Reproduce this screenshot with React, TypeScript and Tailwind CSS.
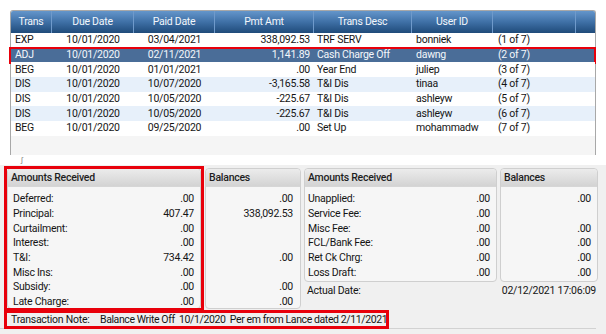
const cols = [
  { key: "trans", label: "Trans", w: "w-[41px]", cell: "pl-[4px] text-left" },
  { key: "due", label: "Due Date", w: "w-[82px]", cell: "text-center" },
  { key: "paid", label: "Paid Date", w: "w-[81px]", cell: "text-center" },
  { key: "amt", label: "Pmt Amt", w: "w-[99px]", cell: "pr-[4px] text-right" },
  { key: "desc", label: "Trans Desc", w: "w-[98px]", cell: "pl-[3px] text-left" },
  { key: "user", label: "User ID", w: "w-[81px]", cell: "pl-[4px] text-left" },
  { key: "count", label: "", w: "w-[83px]", cell: "pl-[5px] text-left" },
];

const rows = [
  ["EXP", "10/01/2020", "03/04/2021", "338,092.53", "TRF SERV", "bonniek", "(1 of 7)"],
  ["ADJ", "10/01/2020", "02/11/2021", "1,141.89", "Cash Charge Off", "dawng", "(2 of 7)"],
  ["BEG", "10/01/2020", "01/01/2021", ".00", "Year End", "juliep", "(3 of 7)"],
  ["DIS", "10/01/2020", "10/07/2020", "-3,165.58", "T&I Dis", "tinaa", "(4 of 7)"],
  ["DIS", "10/01/2020", "10/05/2020", "-225.67", "T&I Dis", "ashleyw", "(5 of 7)"],
  ["DIS", "10/01/2020", "10/05/2020", "-225.67", "T&I Dis", "ashleyw", "(6 of 7)"],
  ["BEG", "10/01/2020", "09/25/2020", ".00", "Set Up", "mohammadw", "(7 of 7)"],
];

const received = [
  ["Deferred:", ".00", ".00"],
  ["Principal:", "407.47", "338,092.53"],
  ["Curtailment:", ".00", ""],
  ["Interest:", ".00", ""],
  ["T&I:", "734.42", ".00"],
  ["Misc Ins:", ".00", ""],
  ["Subsidy:", ".00", ".00"],
  ["Late Charge:", ".00", ".00"],
];

const fees = [
  ["Unapplied:", ".00", ".00"],
  ["Service Fee:", ".00", ""],
  ["Misc Fee:", ".00", ".00"],
  ["FCL/Bank Fee:", ".00", ".00"],
  ["Ret Ck Chrg:", ".00", ".00"],
  ["Loss Draft:", ".00", ".00"],
];

function Panel({ title, className, children }: { title: string; className: string; children: React.ReactNode }) {
  return (
    <div className={`flex flex-col rounded-[4px] border border-[#cfcfcf] bg-[#f6f6f6] ${className}`}>
      <div className="h-[18px] shrink-0 rounded-t-[4px] border-b border-[#d6d6d6] bg-gradient-to-b from-[#ececec] to-[#d3d3d3] pl-[3px] font-medium leading-[18px] text-[#1e1e1e]">
        {title}
      </div>
      <div className="flex flex-col pt-[5px]">{children}</div>
    </div>
  );
}

export default function App() {
  return (
    <div className="relative h-[334px] w-[606px] overflow-hidden bg-white font-['Roboto',sans-serif] text-[10.5px] tracking-[-0.25px] text-[#151515]">
      {/* transaction grid */}
      <div className="ml-[10px] mt-[10px] flex h-[145px] w-[586px] flex-col rounded-t-[3px] border-x border-t border-[#a8a8a8] bg-[#f5f5f5]">
        <div className="flex h-[22px] shrink-0 rounded-t-[2px] bg-gradient-to-b from-[#6496cb] via-[#3f70a6] to-[#1f4b7a] text-[#f2f6fb]">
          {cols.map((c) => (
            <div key={c.key} className={`${c.w} flex items-center justify-center border-r border-[#6f9acb]`}>
              {c.label}
            </div>
          ))}
          <div className="flex-1" />
        </div>
        {rows.map((r, i) => {
          const selected = i === 1;
          const bg = selected ? "bg-[#4a6d98] text-[#f4f7fb]" : i % 2 === 1 ? "bg-[#e7f0fa]" : "bg-white";
          return (
            <div key={i} className={`relative flex h-[14.7px] items-center ${bg}`}>
              {cols.map((c, j) => (
                <div key={c.key} className={`${c.w} ${c.cell} whitespace-nowrap leading-[14px]`}>
                  {r[j]}
                </div>
              ))}
              {selected && (
                <div className="pointer-events-none absolute -bottom-[2px] -left-[2px] -right-[1px] -top-[1px] border-2 border-[#e8000b]" />
              )}
            </div>
          );
        })}
      </div>

      <div className="ml-[21px] h-[10px] text-[8px] leading-[10px] text-[#888]">ʃ</div>

      {/* detail area */}
      <div className="flex h-[169px] flex-col bg-[#f0f0f0] pt-[3px]">
        <div className="flex gap-[3px] pl-[7px]">
          <div className="relative">
            <Panel title="Amounts Received" className="h-[141px] w-[194px]">
              {received.map(([label, value]) => (
                <div key={label} className="flex h-[14.7px] items-center justify-between pl-[5px] pr-[6px] leading-[14px]">
                  <span>{label}</span>
                  <span>{value}</span>
                </div>
              ))}
            </Panel>
            <div className="pointer-events-none absolute -bottom-[2px] -left-[3px] -right-[3px] -top-[2px] border-[3px] border-[#e8000b]" />
          </div>
          <Panel title="Balances" className="ml-[1px] h-[141px] w-[96px]">
            {received.map(([label, , bal]) => (
              <div key={label} className="flex h-[14.7px] items-center justify-end pr-[7px] leading-[14px]">
                {bal}
              </div>
            ))}
          </Panel>

          <div className="flex flex-col">
            <div className="flex gap-[3px]">
              <Panel title="Amounts Received" className="h-[114px] w-[193px]">
                {fees.map(([label, value]) => (
                  <div key={label} className="flex h-[14.7px] items-center justify-between pl-[3px] pr-[6px] leading-[14px]">
                    <span>{label}</span>
                    <span>{value}</span>
                  </div>
                ))}
              </Panel>
              <Panel title="Balances" className="h-[114px] w-[98px]">
                {fees.map(([label, , bal]) => (
                  <div key={label} className="flex h-[14.7px] items-center justify-end pr-[6px] leading-[14px]">
                    {bal}
                  </div>
                ))}
              </Panel>
            </div>
            <div className="flex h-[16px] items-center justify-between pl-[3px] pr-[2px] pt-[2px]">
              <span>Actual Date:</span>
              <span>02/12/2021 17:06:09</span>
            </div>
          </div>
        </div>

        <div className="mt-[2px] flex w-[596px] items-center border-b border-[#d2d2d2]">
          <div className="relative ml-[5px] flex h-[17px] w-[383px] items-center whitespace-nowrap">
            <span className="w-[95px] shrink-0 pl-[6px]">Transaction Note:</span>
            <span className="whitespace-pre tracking-[-0.4px]">Balance Write Off  10/1/2020  Per em from Lance dated 2/11/2021</span>
            <div className="pointer-events-none absolute -inset-x-[1px] -inset-y-[1px] border-[3px] border-[#e8000b]" />
          </div>
        </div>
      </div>
    </div>
  );
}
